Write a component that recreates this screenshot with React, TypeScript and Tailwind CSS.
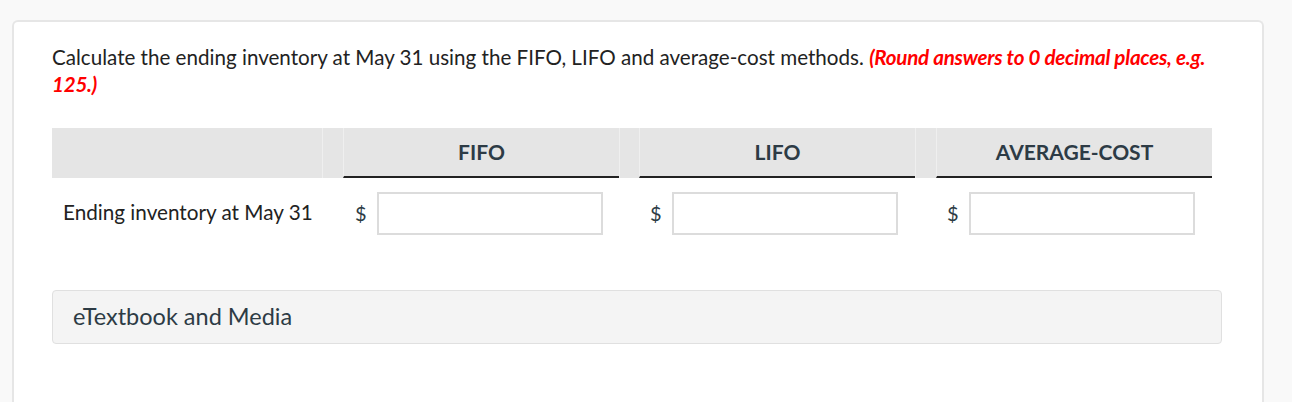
export default function App() {
  const cols = ["FIFO", "LIFO", "AVERAGE-COST"];

  return (
    <div
      className="min-h-[402px] bg-[#f9f9f9] pl-[12px] pr-[28px] pt-[20px]"
      style={{ fontFamily: "Lato, 'Open Sans', sans-serif" }}
    >
      <div className="min-h-[382px] rounded-t-[6px] border-2 border-b-0 border-[#e6e6e6] bg-white pl-[38px] pr-[39px] pt-[22px]">
        <p className="text-[20.6px] leading-[27px] text-[#222]">
          Calculate the ending inventory at May 31 using the FIFO, LIFO and
          average-cost methods.{" "}
          <span className="font-bold italic tracking-[-0.25px] text-[#ff0000]">
            (Round answers to 0 decimal places, e.g. 125.)
          </span>
        </p>

        <div className="mt-[30px] grid w-[1160px] grid-cols-[270px_21px_276px_20px_276px_21px_276px]">
          <div className="h-[50px] bg-[#e5e5e5]" />
          {cols.map((c) => (
            <>
              <div
                key={c + "s"}
                className="h-[50px] border-l border-[#efefef] bg-[#e5e5e5]"
              />
              <div
                key={c}
                className="flex h-[50px] items-center justify-center border-b-2 border-l border-b-[#222] border-l-[#efefef] bg-[#e5e5e5] text-[21px] font-bold text-[#2d3b45]"
              >
                {c}
              </div>
            </>
          ))}

          <div className="flex h-[70px] items-center pl-[11px] text-[20.7px] text-[#222]">
            Ending inventory at May 31
          </div>
          {cols.map((c, i) => (
            <>
              <div key={c + "r"} />
              <div
                key={c + "i"}
                className={`flex h-[70px] items-center ${
                  i === 0 ? "pl-[12px]" : "pl-[11px]"
                }`}
              >
                <span className="w-[22px] text-[20px] text-[#2d3b45]">$</span>
                <input
                  className="h-[43px] w-[226px] border-2 border-[#dcdcdc] bg-white outline-none"
                  aria-label={c}
                />
              </div>
            </>
          ))}
        </div>

        <div className="mt-[42px] flex h-[54px] w-[1170px] items-center rounded-[4px] border border-[#e0e0e0] bg-[#f4f4f4] pl-[20px] text-[23.5px] text-[#2d3b45]">
          eTextbook and Media
        </div>
      </div>
    </div>
  );
}
